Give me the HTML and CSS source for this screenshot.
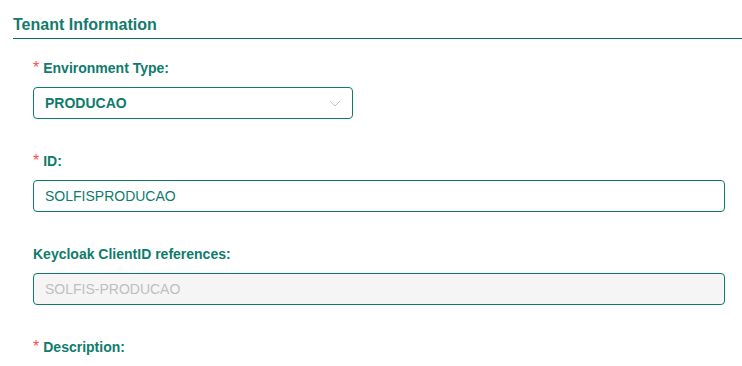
FILE: index.html
```html
<!DOCTYPE html>
<html>
<head>
<meta charset="utf-8">
<link rel="stylesheet" href="styles.css">
</head>
<body>
<section class="panel">
  <h2 class="panel-title">Tenant Information</h2>
  <form class="form">
    <div class="item">
      <label class="label required">Environment Type:</label>
      <div class="select">
        <span class="select-value">PRODUCAO</span>
        <svg class="chevron" width="12" height="12" viewBox="0 0 12 12"><path d="M1 4 L6 9 L11 4" fill="none" stroke="#c4c4c4" stroke-width="1"/></svg>
      </div>
    </div>
    <div class="item">
      <label class="label required">ID:</label>
      <input class="input" type="text" value="SOLFISPRODUCAO">
    </div>
    <div class="item">
      <label class="label">Keycloak ClientID references:</label>
      <input class="input disabled" type="text" value="SOLFIS-PRODUCAO" disabled>
    </div>
    <div class="item last">
      <label class="label required">Description:</label>
    </div>
  </form>
</section>
</body>
</html>
```
FILE: styles.css
```css
html, body {
  margin: 0;
  padding: 0;
  background: #ffffff;
}
body {
  font-family: "Liberation Sans", Arial, sans-serif;
  color: #0f7b6c;
  width: 742px;
  height: 366px;
  overflow: hidden;
}
.panel {
  padding: 13px 0 0 13px;
}
.panel-title {
  margin: 0;
  font-size: 16px;
  font-weight: bold;
  line-height: 24px;
  padding-bottom: 1px;
  color: #137a6d;
  border-bottom: 1px solid #0f6e5f;
}
.form {
  padding: 18px 17px 0 20px;
  display: flex;
  flex-direction: column;
}
.item {
  display: flex;
  flex-direction: column;
  margin-bottom: 31px;
}
.item.last {
  margin-bottom: 0;
}
.label {
  display: block;
  font-size: 14px;
  font-weight: bold;
  line-height: 22px;
  padding-bottom: 8px;
  color: #0f7b6c;
}
.label.required::before {
  content: "*";
  color: #ff4d4f;
  margin-right: 4px;
  font-family: "Liberation Sans", Arial, sans-serif;
  font-weight: normal;
  font-size: 16px;
}
.select {
  width: 320px;
  height: 32px;
  box-sizing: border-box;
  border: 1px solid #0f7b6c;
  border-radius: 4px;
  display: flex;
  align-items: center;
  justify-content: space-between;
  padding: 0 11px;
}
.select-value {
  font-size: 14px;
  font-weight: bold;
  color: #0f7b6c;
}
.chevron {
  display: block;
}
.input {
  width: 100%;
  height: 32px;
  box-sizing: border-box;
  border: 1px solid #0f7b6c;
  border-radius: 4px;
  padding: 0 11px;
  font-family: "Liberation Sans", Arial, sans-serif;
  font-size: 14px;
  color: #0f7b6c;
  background: #ffffff;
  outline: none;
  margin: 0;
}
.input.disabled {
  background: #f5f5f5;
  color: #bfbfbf;
}
```
